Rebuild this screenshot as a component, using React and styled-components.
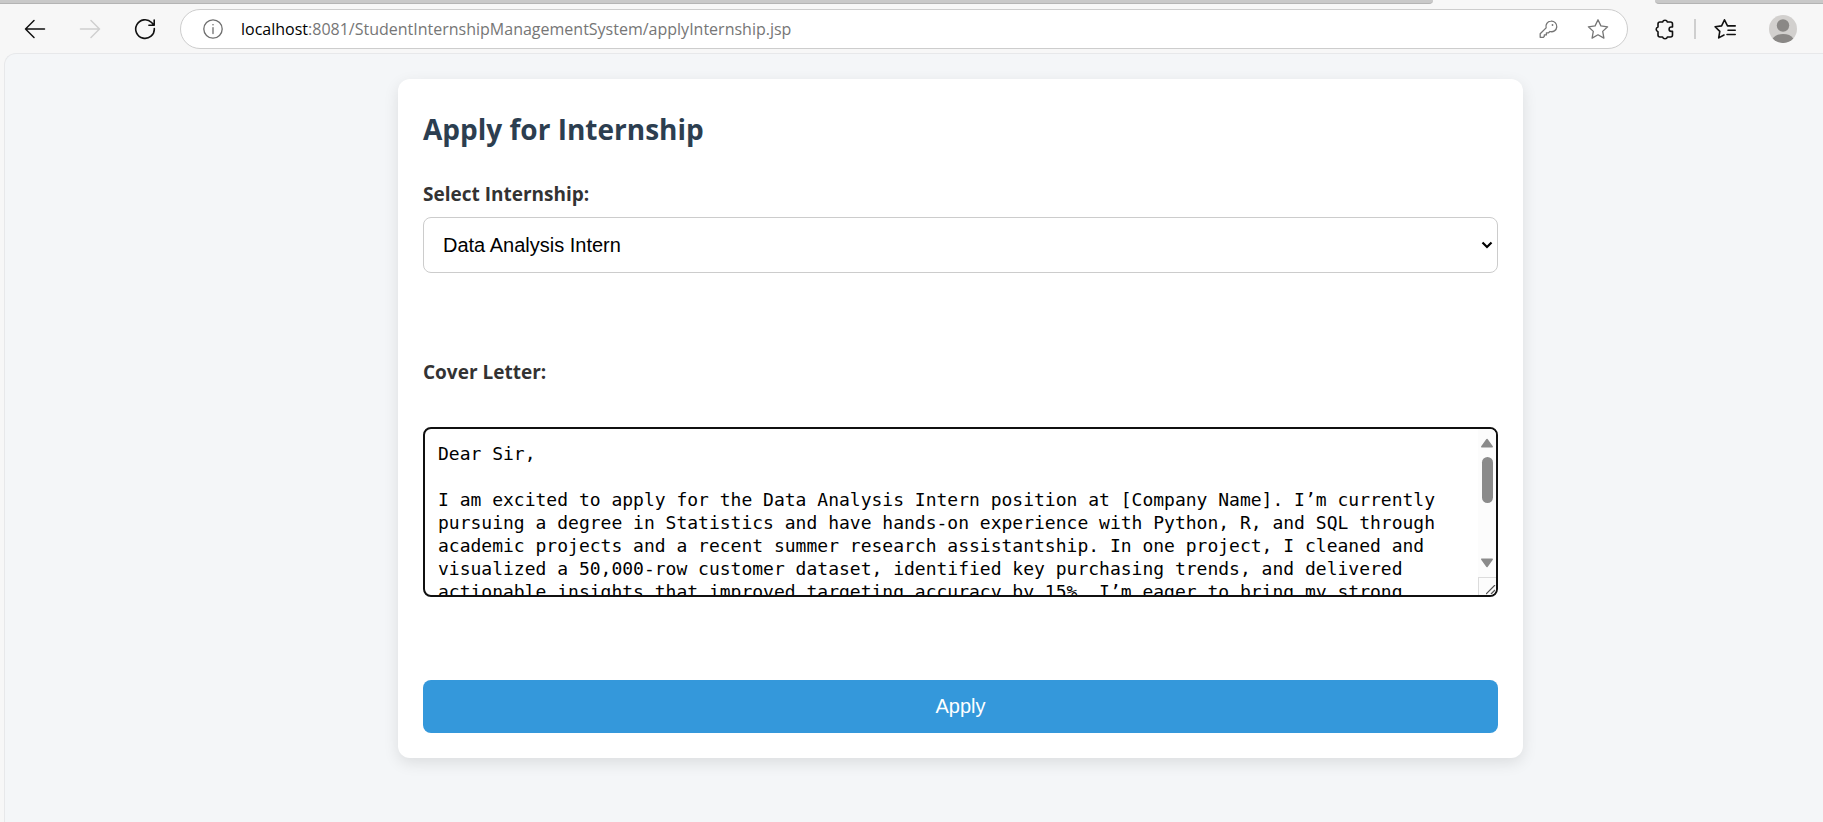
import React from "react";
import styled, { createGlobalStyle } from "styled-components";

const GlobalStyle = createGlobalStyle`
  *, *::before, *::after { box-sizing: border-box; }
  body {
    margin: 0;
    background: #f7f7f7;
    color: #333;
    font-family: "Segoe UI", "Open Sans", "Noto Sans", sans-serif;
  }
`;

const Window = styled.div`
  display: flex;
  flex-direction: column;
  min-height: 100vh;
`;

const TabStrip = styled.div`
  display: flex;
  justify-content: space-between;
  height: 4px;
`;

const TabEdge = styled.div`
  flex: ${(p) => p.$grow} 0 0;
  margin-left: ${(p) => (p.$side === "right" ? "222px" : "0")};
  background: #c9c9c9;
  border-bottom: 1px solid #b4b4b4;
  border-radius: ${(p) => (p.$side === "right" ? "0 0 0 4px" : "0 0 4px 0")};
`;

const Toolbar = styled.header`
  display: flex;
  align-items: center;
  height: 49px;
  padding: 0 26px 0 17px;
`;

const NavGroup = styled.nav`
  display: flex;
  gap: 19px;
  margin-right: 17px;
`;

const IconButton = styled.button`
  display: flex;
  align-items: center;
  justify-content: center;
  width: ${(p) => p.$width || 36}px;
  height: 36px;
  padding: 0;
  border: 0;
  background: none;
  color: ${(p) => p.$color || "#111"};
`;

const AddressBar = styled.div`
  display: flex;
  flex: 1;
  align-items: center;
  height: 40px;
  padding: 0 18px 0 22px;
  border: 1px solid #cdcdcd;
  border-radius: 20px;
  background: #fff;
`;

const Host = styled.label`
  margin-left: 18px;
  color: #000;
  font-size: 16px;
  line-height: 24px;
`;

const PathInput = styled.input`
  flex: 1;
  min-width: 0;
  height: 24px;
  padding: 0;
  border: 0;
  outline: 0;
  background: none;
  color: #767676;
  font: inherit;
  font-size: 16px;
  line-height: 24px;
`;

const BarActions = styled.div`
  display: flex;
  gap: 28px;
`;

const Tools = styled.div`
  display: flex;
  align-items: center;
  gap: 14px;
  margin-left: 22px;
`;

const Divider = styled.span`
  width: 2px;
  height: 20px;
  background: #cfcfcf;
`;

const Avatar = styled(IconButton)`
  margin-left: 15px;
`;

const Viewport = styled.main`
  flex: 1;
  margin-left: 4px;
  padding: 25px 0 25px 93px;
  border: 1px solid #e7e8ea;
  border-width: 1px 0 0 1px;
  border-radius: 12px 0 0 0;
  background: #f4f6f8;
`;

const Card = styled.form`
  display: flex;
  flex-direction: column;
  max-width: 1125px;
  margin: 0 auto;
  padding: 25px;
  border-radius: 12px;
  background: #fff;
  box-shadow: 0 5px 15px rgba(0, 0, 0, 0.1);
`;

const Title = styled.h2`
  margin: 5px 0 31px;
  color: #2c3e50;
  font-size: 28px;
  font-weight: 700;
  line-height: 40px;
`;

const Label = styled.label`
  font-size: 19px;
  font-weight: 700;
  line-height: 28px;
`;

const SelectBox = styled.div`
  display: grid;
  align-items: center;
  margin: 9px 0 85px;

  > * { grid-area: 1 / 1; }
  > svg { justify-self: end; margin-right: 4px; pointer-events: none; }
`;

const Select = styled.select`
  appearance: none;
  width: 100%;
  height: 56px;
  padding: 0 19px;
  border: 1px solid #ccc;
  border-radius: 8px;
  background: #fff;
  color: #000;
  font-family: Arial, "Liberation Sans", sans-serif;
  font-size: 20px;
`;

const LetterBox = styled.div`
  display: flex;
  height: 170px;
  margin: 41px 0 83px;
  border: 2px solid #101010;
  border-radius: 8px;
  background: #fff;
  overflow: hidden;
`;

const Letter = styled.textarea`
  flex: 1;
  min-width: 0;
  padding: 13px 0 0 13px;
  border: 0;
  outline: 0;
  resize: none;
  overflow: hidden;
  background: none;
  color: #000;
  font-family: Consolas, "DejaVu Sans Mono", monospace;
  font-size: 18px;
  line-height: 23px;
`;

const ScrollTrack = styled.div`
  display: flex;
  flex-direction: column;
  align-items: center;
  width: 18px;
  padding-top: 9px;
  background: #fcfcfc;
`;

const ScrollThumb = styled.div`
  width: 11px;
  height: 46px;
  margin: 9px 0 55px;
  border-radius: 6px;
  background: #8b8b8b;
`;

const Grip = styled.div`
  display: flex;
  align-items: flex-end;
  justify-content: flex-end;
  width: 18px;
  height: 18px;
  margin-top: auto;
  border: 1px solid #dcdcdc;
  border-width: 1px 0 0 1px;
`;

const Submit = styled.button`
  height: 53px;
  padding: 0;
  border: 0;
  border-radius: 8px;
  background: #3498db;
  color: #fff;
  font-family: Arial, "Liberation Sans", sans-serif;
  font-size: 20px;
`;

const Icon = ({ size = 22, width = 1.4, children }) => (
  <svg
    width={size}
    height={size}
    viewBox={`0 0 ${size} ${size}`}
    fill="none"
    stroke="currentColor"
    strokeWidth={width}
    strokeLinecap="round"
    strokeLinejoin="round"
    aria-hidden="true"
  >
    {children}
  </svg>
);

const BackIcon = () => (
  <Icon width={1.5}><path d="M20.5 11H1.5M10 2.5L1.5 11l8.500 8.500" /></Icon>
);
const ForwardIcon = () => (
  <Icon width={1.5}><path d="M1.500 11h19M12 2.500l8.500 8.500-8.500 8.500" /></Icon>
);
const ReloadIcon = () => (
  <Icon width={1.6}>
    <path d="M20.300 10.500a9.300 9.300 0 1 1-2.700-6L20 7.200M20.200 2v5.300h-5.300" />
  </Icon>
);
const InfoIcon = () => (
  <Icon size={20} width={1.3}>
    <circle cx="10" cy="10" r="9.200" />
    <path d="M10 8.700v5.800" />
    <circle cx="10" cy="5.800" r=".8" fill="currentColor" stroke="none" />
  </Icon>
);
const KeyIcon = () => (
  <Icon width={1.3}>
    <path d="M13.800 3.200a5.300 5.300 0 1 1-.9 10.300l-1.600 1.400H9.400v2H7.300v1.500l-.9.900H3.200v-3.500l5.900-5.900a5.300 5.300 0 0 1 4.700-6.700z" />
    <circle cx="15.500" cy="7" r=".9" fill="currentColor" stroke="none" />
  </Icon>
);
const StarIcon = () => (
  <Icon width={1.3}>
    <path d="M11 1.800l2.900 6.100 6.700.9-4.900 4.600 1.200 6.700-5.900-3.300-5.900 3.300 1.200-6.700-4.900-4.600 6.700-.9z" />
  </Icon>
);
const PuzzleIcon = () => (
  <Icon width={1.6}>
    <path d="M6 4h2.600a2.500 2.500 0 0 1 4.800 0H16.500a2 2 0 0 1 2 2v3h-1.200a2.200 2.200 0 0 0 0 4.400h1.200V17a2 2 0 0 1-2 2h-3.100a2.500 2.500 0 0 1-4.800 0H6a2 2 0 0 1-2-2v-3.300a2.500 2.500 0 0 1 0-4.800V6a2 2 0 0 1 2-2z" />
  </Icon>
);
const FavoritesIcon = () => (
  <Icon width={1.6}>
    <path d="M13.500 7.900L10.500 1.800 7.600 7.900l-6.500.9 4.700 4.600-1.100 6.500 5.300-2.900M13.500 7.900h7.700M14 12.200h7.200M13 16.500h8.200" />
  </Icon>
);
const AvatarIcon = () => (
  <svg width="28" height="28" viewBox="0 0 28 28" aria-hidden="true">
    <circle cx="14" cy="14" r="14" fill="#d2d0ce" />
    <circle cx="14" cy="10.500" r="6.200" fill="#8a8886" />
    <path d="M3.700 23.500a11.500 8 0 0 1 20.600 0A14 14 0 0 1 3.700 23.500z" fill="#8a8886" />
  </svg>
);
const Arrow = ({ down }) => (
  <svg width="14" height="10" viewBox="0 0 14 10" aria-hidden="true">
    <path
      d={down ? "M1.800 1.200h10.400L7 8.500z" : "M1.800 8.800h10.400L7 1.500z"}
      fill="#8b8b8b"
      stroke="#8b8b8b"
      strokeWidth="1.500"
      strokeLinejoin="round"
    />
  </svg>
);

const LETTER = `Dear Sir,

I am excited to apply for the Data Analysis Intern position at [Company Name]. I’m currently pursuing a degree in Statistics and have hands-on experience with Python, R, and SQL through academic projects and a recent summer research assistantship. In one project, I cleaned and visualized a 50,000-row customer dataset, identified key purchasing trends, and delivered actionable insights that improved targeting accuracy by 15%. I’m eager to bring my strong`;

export default function App() {
  return (
    <Window>
      <GlobalStyle />
      <TabStrip>
        <TabEdge $side="left" $grow={1433} />
        <TabEdge $side="right" $grow={168} />
      </TabStrip>
      <Toolbar>
        <NavGroup aria-label="Browser">
          <IconButton type="button" aria-label="Back"><BackIcon /></IconButton>
          <IconButton type="button" aria-label="Forward" $color="#cfcfcf"><ForwardIcon /></IconButton>
          <IconButton type="button" aria-label="Reload"><ReloadIcon /></IconButton>
        </NavGroup>
        <AddressBar>
          <IconButton type="button" aria-label="Site information" $width={20} $color="#6e6e6e"><InfoIcon /></IconButton>
          <Host htmlFor="address">localhost</Host>
          <PathInput
            id="address"
            defaultValue=":8081/StudentInternshipManagementSystem/applyInternship.jsp"
          />
          <BarActions>
            <IconButton type="button" aria-label="Passwords" $width={22} $color="#757575"><KeyIcon /></IconButton>
            <IconButton type="button" aria-label="Add to favorites" $width={22} $color="#757575"><StarIcon /></IconButton>
          </BarActions>
        </AddressBar>
        <Tools>
          <IconButton type="button" aria-label="Extensions" $width={30}><PuzzleIcon /></IconButton>
          <Divider />
          <IconButton type="button" aria-label="Favorites" $width={30}><FavoritesIcon /></IconButton>
          <Avatar type="button" aria-label="Profile" $width={28}><AvatarIcon /></Avatar>
        </Tools>
      </Toolbar>
      <Viewport>
        <Card onSubmit={(e) => e.preventDefault()}>
          <Title>Apply for Internship</Title>
          <Label htmlFor="internship">Select Internship:</Label>
          <SelectBox>
            <Select id="internship" defaultValue="data">
              <option value="data">Data Analysis Intern</option>
            </Select>
            <svg width="14" height="10" viewBox="0 0 14 10" aria-hidden="true">
              <path d="M2.500 2.500L7 7l4.500-4.500" fill="none" stroke="#000" strokeWidth="2.200" />
            </svg>
          </SelectBox>
          <Label htmlFor="letter">Cover Letter:</Label>
          <LetterBox>
            <Letter id="letter" spellCheck={false} defaultValue={LETTER} />
            <ScrollTrack aria-hidden="true">
              <Arrow />
              <ScrollThumb />
              <Arrow down />
              <Grip>
                <svg width="10" height="10" viewBox="0 0 10 10">
                  <path d="M0 9L9 0M5 9l4-4" stroke="#555" strokeWidth="1.200" />
                </svg>
              </Grip>
            </ScrollTrack>
          </LetterBox>
          <Submit type="submit">Apply</Submit>
        </Card>
      </Viewport>
    </Window>
  );
}
